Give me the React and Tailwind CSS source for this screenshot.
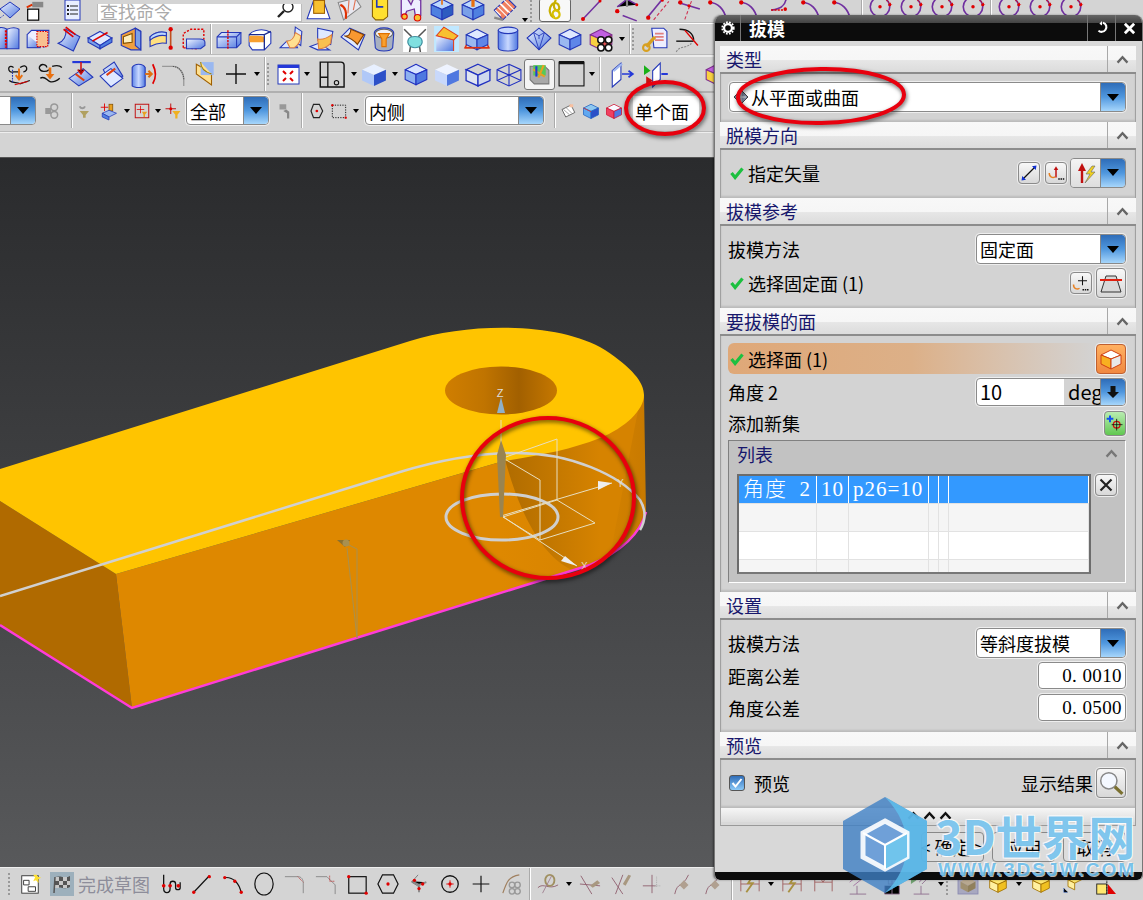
import React from "react";

const Svg = ({ children, s = 26 }) => (
  <svg viewBox="0 0 24 24" width={s} height={s} className="block shrink-0 overflow-visible">{children}</svg>
);
const cube = (t, l, r, st = "#2438b8") => (
  <g stroke={st} strokeWidth="1" strokeLinejoin="round">
    <polygon points="12,3 22,8 12,12.5 2,8" fill={t} />
    <polygon points="2,8 12,12.5 12,22 2,17" fill={l} />
    <polygon points="22,8 12,12.5 12,22 22,17" fill={r} />
  </g>
);
const dot = (x, y, r = 1.4, c = "#e00000") => <circle cx={x} cy={y} r={r} fill={c} />;

const I = {
  diamond: <g><polygon points="12,4 22,11 12,20 2,11" fill="url(#gb)" stroke="#2438b8" /><path d="M2 20l4-3" stroke="#2438b8" strokeDasharray="1 1" /></g>,
  newdoc: <g><rect x="4" y="10" width="12" height="12" fill="#fff" stroke="#111" strokeWidth="1.4" /><rect x="9" y="2" width="12" height="6" fill="#888" /><path d="M3 8l6-3" stroke="#e03000" strokeWidth="2" /></g>,
  list: <g><rect x="6" y="2" width="15" height="20" fill="#e8eeff" stroke="#2438b8" /><path d="M11 8h8M11 12h8M11 16h8" stroke="#222" /><rect x="8" y="7" width="2" height="2" fill="#222" /><rect x="8" y="11" width="2" height="2" fill="#222" /><rect x="8" y="15" width="2" height="2" fill="#222" /></g>,
  pyr: <g><polygon points="2,21 8,4 17,4 23,21" fill="#fff" stroke="#2438b8" /><rect x="8" y="4" width="10" height="12" fill="#f8c030" stroke="#a06000" /></g>,
  mesh: <g><path d="M2 6L18 2l5 8-16 12z" fill="#e8e8f0" stroke="#888" /><path d="M4 8c5 2 6 8 5 13" stroke="#e03000" strokeWidth="2" fill="none" /><path d="M18 3l-2 10M12 4l-1 12" stroke="#e07050" /></g>,
  yel: <g><path d="M5 1h14v18l-4 3H8l-3-3z" fill="#ffe030" stroke="#886000" /><path d="M9 1v9h6" stroke="#2438b8" strokeWidth="1.5" fill="none" /></g>,
  purp: <g><path d="M3 3h6l3 5 3-7 6 3v14h-5l-1-6-7 2-2 5H3z" fill="#eef" stroke="#7030a0" strokeWidth="1.2" /><circle cx="18" cy="20" r="3" fill="#f8c030" stroke="#d00" /><circle cx="6" cy="19" r="2.5" fill="#f8c030" stroke="#d00" /></g>,
  slab1: <g>{cube("#bcd8ff", "#4f80e0", "#2d5cc0")}<path d="M12 8V1M9 2l3-2 3 2" stroke="#e87010" strokeWidth="1.5" fill="none" /></g>,
  slab2: <g>{cube("#bcd8ff", "#7aa0e8", "#4f80e0")}<path d="M12 10V2" stroke="#e87010" strokeWidth="3" /><path d="M9 4l3-4 3 4z" fill="#e87010" /></g>,
  grid: <g><polygon points="3,13 15,2 23,10 11,22" fill="#f08060" stroke="#2438b8" /><path d="M6 10l9 9M9 7l9 9M12 4l9 9M9 18l-5-5M8 7l8 8" stroke="#fff" /><path d="M3 20l8 2" stroke="#888" strokeWidth="2" /></g>,
  knot: <g><path d="M10 20c-4-3-5-9-2-13 2-4 7-3 8 0 2 5-2 7-4 4-3-4 0-8 1-10" fill="none" stroke="#c8b000" strokeWidth="2.4" /><path d="M10 20c3 2 7 1 7-3s-5-6-7-3 1 6 2 6" fill="none" stroke="#d8c000" strokeWidth="2.4" /></g>,
  l1: <g><path d="M4 21L21 3" stroke="#7030a0" strokeWidth="1.5" />{dot(4, 21, 2)}{dot(21, 3, 1.5)}</g>,
  l2: <g><path d="M3 10l9-7 9 5M8 18l13 5" stroke="#7030a0" strokeWidth="1.4" /><path d="M12 3v7" stroke="#888" strokeWidth="2" />{dot(3, 14, 2)}{dot(21, 8)}</g>,
  l3: <g><path d="M2 20L16 3" stroke="#7030a0" strokeWidth="1.5" /><path d="M8 22L22 5" stroke="#d03050" strokeDasharray="3 2" />{dot(3, 20, 2)}{dot(16, 4)}</g>,
  l4: <g><path d="M2 6l20 6" stroke="#7030a0" strokeWidth="1.5" /><path d="M16 0L8 22" stroke="#d03050" strokeDasharray="3 2" />{dot(4, 6, 2)}{dot(12, 9, 1.5)}</g>,
  arc: <g><path d="M2 6c8 0 14 6 16 16" stroke="#7030a0" strokeWidth="1.6" fill="none" />{dot(3, 6, 2)}{dot(17, 20, 2)}</g>,
  arc2: <g><path d="M16 0c0 8-4 12-14 13" stroke="#7030a0" strokeWidth="1.6" fill="none" /><path d="M2 13h14" stroke="#e00000" strokeDasharray="2 1" strokeWidth="1.4" />{dot(15, 12, 1.6)}</g>,
  circ: <g><circle cx="12" cy="10" r="9" fill="none" stroke="#7030a0" strokeWidth="1.5" />{dot(12, 10, 1.6)}{dot(21, 8, 1.4)}<path d="M18 4l5 4" stroke="#e00000" strokeDasharray="1 1" /></g>,

  ribs: <g><path d="M1 3c4-2 8-2 11 0v18H1z" fill="url(#gb)" stroke="#2438b8" /><path d="M12 3c5-2 8-2 11 0v18H12z" fill="url(#gb)" stroke="#2438b8" /><path d="M11 4v16" stroke="#e00000" strokeDasharray="2 1" strokeWidth="2" /></g>,
  extr: <g><rect x="2" y="8" width="12" height="12" fill="url(#gb)" stroke="#2438b8" /><path d="M2 8l4-4h16v12l-5 4" fill="#eef" stroke="#2438b8" /><rect x="11" y="5" width="10" height="14" fill="#f8c090" stroke="#e00000" strokeDasharray="1.5 1" /></g>,
  sheet: <g><path d="M9 3l13 7-6 13-14-7c5-2 8-7 7-13z" fill="url(#gb)" stroke="#2438b8" /><path d="M9 1l9 7M7 3l9 7" stroke="#e00000" strokeWidth="1.5" /></g>,
  flat: <g><polygon points="12,5 23,11 12,18 1,11" fill="#dfe9ff" stroke="#2438b8" /><polygon points="1,11 12,18 12,21 1,15" fill="#7aa0e8" stroke="#2438b8" /><polygon points="23,11 12,18 12,21 23,15" fill="#4f80e0" stroke="#2438b8" /><path d="M5 14L19 6" stroke="#e00000" strokeWidth="1.5" /></g>,
  ushape: <g><polygon points="3,8 16,2 21,5 21,22 12,22 3,18" fill="#f0a040" stroke="#2438b8" /><polygon points="16,2 21,5 21,22 16,18" fill="#7aa0e8" stroke="#2438b8" /><path d="M5 10l8-3v8l-8 1z" fill="#fff0c0" stroke="#805000" /></g>,
  wave: <g><path d="M1 10c4-4 10-5 15-4v10c-5-1-10 0-15 3z" fill="#ffe080" stroke="#2438b8" /><path d="M1 10c4-4 10-5 15-4v3C11 8 6 9 1 13z" fill="#bcd8ff" stroke="#2438b8" /><path d="M20 3v17" stroke="#c05020" strokeWidth="1.5" />{dot(20, 3, 2, "#e00000")}{dot(20, 20, 2, "#e00000")}</g>,
  redbox: <g><path d="M3 20V7l7-4h12v13l-6 5z" fill="none" stroke="#e00000" strokeDasharray="2 1.4" strokeWidth="1.3" /><path d="M6 12h12c3 0 5 1 5 3v3l-4 3H6z" fill="url(#gb)" stroke="#2438b8" /></g>,
  bx1: <g><path d="M1 10l4-4h18v10l-4 4H1z" fill="url(#gb)" stroke="#2438b8" /><path d="M1 10h18v10M19 10l4-4" stroke="#2438b8" fill="none" /><path d="M11 4v18" stroke="#e00000" strokeDasharray="2 1" strokeWidth="1.3" /></g>,
  bx2: <g><path d="M2 8c4-5 14-6 20-2v10l-6 6H5l-3-4z" fill="#fff" stroke="#2438b8" /><path d="M2 9c6 0 11 0 14 1v5H2z" fill="#f8a030" /><path d="M2 8h14l6-3M16 8v14" stroke="#1a2a90" strokeWidth="1.2" fill="none" /></g>,
  lsh: <g><path d="M16 1l6 4-1 13-6-4z" fill="#dfe9ff" stroke="#2438b8" /><path d="M2 20l6-6 7 0 3 6z" fill="#dfe9ff" stroke="#2438b8" /><path d="M8 14c4 0 7-3 8-8l5 3c0 5-3 9-6 11l-4 0z" fill="#ffe090" stroke="#e08040" /></g>,
  lsh2: <g><path d="M8 2l14 3-2 12-12-4z" fill="#dfe9ff" stroke="#2438b8" /><path d="M1 19l8-3 10 6H8z" fill="#dfe9ff" stroke="#2438b8" /><path d="M8 12c4 1 9-1 13-4l-1 8c-3 3-7 5-11 5z" fill="#f8c050" stroke="#e08040" /></g>,
  orange: <g><path d="M1 10l8-8 14 6-6 14z" fill="#dfe9ff" stroke="#2438b8" /><path d="M4 9c4 1 6-2 6-6l12 5-6 9c-2-3-7-6-12-8z" fill="#f89830" stroke="#804000" /></g>,
  cup: <g><path d="M3 7c0-7 18-7 18 0l-1 13c-2 4-14 4-16 0z" fill="#a8b0c0" stroke="#2438b8" /><ellipse cx="12" cy="7" rx="8" ry="4" fill="#f0f0f8" stroke="#666" /><path d="M7 7h10l-3 5v7h-4v-7z" fill="#f8a030" stroke="#e07000" /></g>,
  teal: <g><rect x="1" y="0" width="22" height="24" fill="#fff" /><path d="M2 3l7 7M22 3l-7 7M8 18l-1 6M16 18l1 6" stroke="#555" strokeWidth="1.4" /><path d="M6 12c2-3 10-3 12 0 2 4-1 8-6 8s-8-4-6-8z" fill="#80e0e0" stroke="#4090a0" /></g>,
  otop: <g><rect x="1" y="0" width="23" height="24" fill="#c0e8ff" /><path d="M3 9l7-8 13 8-4 4z" fill="#f8c030" stroke="#e04020" /><path d="M3 9l16 4v10H3z" fill="url(#gb)" /><path d="M3 9l16 4v10" stroke="#e04020" fill="none" /></g>,
  rpyr: <g><path d="M1 20L8 7h8l7 13z" fill="none" stroke="#e03010" strokeWidth="1.4" />{cube("#dfe9ff", "#9ab8f0", "#5f86e8")}<path d="M1 20h22" stroke="#e03010" strokeWidth="1.4" /></g>,
  cyl: <g><path d="M3 4v16c0 4 18 4 18 0V4z" fill="url(#gh)" stroke="#2438b8" /><ellipse cx="12" cy="4" rx="9" ry="3" fill="#c8d8ff" stroke="#2438b8" /></g>,
  dia: <g><polygon points="12,2 23,11 12,22 1,11" fill="url(#gb)" stroke="#2438b8" /><path d="M1 11l6-5 5 3 5-3 6 5M7 6l5 16 5-16M12 9v3" stroke="#2438b8" fill="none" strokeWidth=".8" /></g>,
  blu: cube("#dfe9ff", "#9ab8f0", "#5f86e8"),
  cubes: <g>{cube("#c060e0", "#f8d040", "#e05050", "#803090")}{[[12, 13], [19, 13], [12, 20], [19, 20]].map(([x, y]) => <circle key={x + "" + y} cx={x} cy={y} r="3" fill="#fff" stroke="#111" strokeWidth="1.4" />)}</g>,
  key: <g><path d="M9 2h11l3 3v15H11z" fill="#eef" stroke="#2438b8" /><path d="M12 7h8M12 10h8M12 13h8" stroke="#e08080" strokeWidth="1.6" /><path d="M12 10l-8 9" stroke="#d8a020" strokeWidth="3" /><circle cx="4" cy="20" r="3" fill="none" stroke="#d8a020" strokeWidth="2" /></g>,
  trim: <g><path d="M3 14h16" stroke="#111" strokeWidth="1.3" /><path d="M6 3c8 0 13 4 13 10" stroke="#111" fill="none" strokeWidth="1.3" /><path d="M11 4l12 14" stroke="#e00000" strokeWidth="1.3" /><path d="M3 24c3-6 9-3 14-8" stroke="#888" strokeDasharray="2 1" fill="none" /></g>,

  c1: <g><path d="M7 6c-6-4-6 6 0 4h6" stroke="#111" fill="none" strokeWidth="1.2" /><path d="M13 6c7-5 8 4 3 4M3 18c3 3 7 1 10 3l9-3" stroke="#111" fill="none" strokeWidth="1.2" /><path d="M12 7v9M9 13l3 4 3-4" stroke="#e87010" strokeWidth="1.8" fill="none" /><path d="M6 8v12" stroke="#2438b8" strokeDasharray="1.5 1" /><path d="M8 22l12-3" stroke="#e00000" /></g>,
  c2: <g><path d="M2 6c2-5 7-2 7 0M2 6c1 5 7 4 9 2M14 5c3-1 7-1 9 1M3 16c4-3 6 2 9 3 3 1 7-1 9-3" stroke="#111" fill="none" strokeWidth="1.2" /><path d="M12 6v8" stroke="#e87010" strokeWidth="2.4" /><path d="M8 12l4 5 4-5z" fill="#e87010" /></g>,
  c3: <g><polygon points="1,16 14,7 23,15 10,23" fill="url(#gb)" stroke="#2438b8" /><path d="M4 1h17" stroke="#2438d8" strokeWidth="2" /><path d="M12 1v9M9 8l3 4 3-4" stroke="#d01010" strokeWidth="1.4" /><path d="M7 12l8 6" stroke="#e04010" strokeWidth="2" /></g>,
  c4: <g><polygon points="4,8 14,1 22,14 11,22" fill="url(#gb)" stroke="#2438b8" /><polygon points="1,14 11,7 22,16 11,24" fill="#dfe9ff" stroke="#2438b8" /><path d="M7 13l8-6" stroke="#e04010" strokeWidth="2" /></g>,
  c5: <g><path d="M2 6c2-4 10-4 12 0v17c-2 2-10 2-12 0z" fill="url(#gh)" stroke="#2438b8" /><path d="M14 12h5M17 9l3 3-3 3" stroke="#e07010" strokeWidth="2" fill="none" /><path d="M21 3c3 6 3 13 0 18" stroke="#e00000" fill="none" strokeWidth="1.6" /></g>,
  c6: <g><path d="M1 5h10c6 0 10 6 10 12v6" fill="none" stroke="#999" strokeWidth="1.2" /><path d="M11 5c6 0 10 6 10 12" stroke="#555" strokeDasharray="1 1" fill="none" /></g>,
  c7: <g><path d="M4 3l14 8v11L4 12z" fill="#ffe090" stroke="#a06000" /><path d="M8 1h12v12H8z" fill="#9ab8f0" /><path d="M8 1c0 5 3 9 10 11" fill="#ffe090" stroke="#a08000" /></g>,
  plus: <path d="M12 2v20M2 12h20" stroke="#111" strokeWidth="1.4" />,
  screen: <g><rect x="2" y="3" width="21" height="19" fill="#fff" stroke="#2438b8" /><rect x="2" y="3" width="21" height="3" fill="#2438d8" /><path d="M7 9l3 3M17 9l-3 3M7 19l3-3M17 19l-3-3" stroke="#e00000" strokeWidth="2" /></g>,
  page: <g><path d="M3 1h19c2 0 3 1 3 3v20H3z" fill="#d2d2d2" stroke="#111" strokeWidth="1.3" /><path d="M3 15h7M10 1v23" stroke="#111" strokeWidth="1.2" /><circle cx="18" cy="20" r="2" fill="none" stroke="#111" /></g>,
  soft: <g><polygon points="12,3 23,8 12,13 1,8" fill="#e8f0ff" /><polygon points="1,8 12,13 12,23 1,18" fill="#b0c8f8" /><polygon points="23,8 12,13 12,23 23,18" fill="#2c50c8" /></g>,
  edge: cube("#d8e4ff", "#8eb0f0", "#4f78e0", "#2030c0"),
  soft2: <g><polygon points="12,3 23,8 12,13 1,8" fill="#eef3ff" /><polygon points="1,8 12,13 12,23 1,18" fill="#c8d8fb" /><polygon points="23,8 12,13 12,23 23,18" fill="#5078e0" /></g>,
  wire1: <g stroke="#2030c0" strokeWidth="1.2" fill="none"><polygon points="12,3 23,8 12,13 1,8" /><polygon points="1,8 12,13 12,23 1,18" fill="#dfe4f0" /><polygon points="23,8 12,13 12,23 23,18" fill="#cfd8ee" /></g>,
  wire2: <g stroke="#2030c0" strokeWidth="1" fill="none"><polygon points="12,3 23,8 23,18 12,23 1,18 1,8" /><path d="M1 8l11 5 11-5M12 13v10M12 3v10M1 18l11-5 11 5" /></g>,
  render: <g><path d="M3 4h14l4 4v13H7l-4-4z" fill="#a8a8a8" stroke="#777" /><path d="M6 3h12v10H6z" fill="#58c858" /><path d="M6 7l11 7M16 3l-5 12" stroke="#e8a020" strokeWidth="2" /><path d="M9 4v10" stroke="#2438d8" strokeWidth="2" /></g>,
  black: <g><rect x="1" y="1" width="23" height="22" fill="#d2d2d2" stroke="#111" /><rect x="1" y="0" width="23" height="3" fill="#111" /></g>,
  cut1: <g><polygon points="3,9 11,2 11,17 3,24" fill="#fff" stroke="#2438b8" /><polygon points="3,9 11,2 13,3 5,10" fill="#a0b8f0" /><path d="M12 12h9M18 9l4 3-4 3" stroke="#2438d8" strokeWidth="1.6" fill="none" /></g>,
  cut2: <g><polygon points="8,9 15,2 15,17 8,24" fill="#fff" stroke="#2438b8" /><path d="M0 4l6 5-6 4z" fill="#18b018" /><path d="M2 14l6 4-6 5z" fill="#d01010" /><path d="M16 12h6" stroke="#2438d8" strokeWidth="1.8" /></g>,
  bfc: <g>{cube("#c060e0", "#f8d040", "#e05050", "#803090")}</g>,

  gears: <g><rect x="3" y="8" width="8" height="8" fill="#999" /><circle cx="15" cy="7" r="4.5" fill="none" stroke="#999" strokeWidth="2" /><circle cx="15" cy="17" r="4.5" fill="none" stroke="#999" strokeWidth="2" /></g>,
  f1: <g><path d="M4 5c2 4 6 4 8 0" stroke="#999" strokeWidth="3" fill="none" /><path d="M4 12h14l-5 6v4h-4v-4z" fill="#b0a060" /></g>,
  f2: <g><path d="M6 2v10M1 7h10" stroke="#e00000" strokeWidth="1.2" /><rect x="12" y="3" width="5" height="9" fill="#e8a020" stroke="#805000" /><polygon points="3,15 12,11 22,15 12,20" fill="#9ab8f0" stroke="#2438b8" /><polygon points="3,15 12,20 12,24 3,20" fill="#4f80e0" stroke="#2438b8" /></g>,
  f3: <g><rect x="3" y="3" width="18" height="18" fill="none" stroke="#c01010" strokeWidth="1.3" /><path d="M10 5v10M5 10h10" stroke="#e00000" /><path d="M12 13h7l-3 4v3h-2v-3z" fill="#e8a020" /></g>,
  f4: <g><path d="M9 2v14M2 9h14" stroke="#c01010" strokeWidth="1.3" />{dot(9, 9, 2)}<path d="M11 12h11l-4 5v5h-3v-5z" fill="#f0b020" /></g>,
  f5: <g><rect x="6" y="3" width="9" height="7" fill="#999" /><path d="M15 10l4 3v9h-3v-7l-5-3z" fill="#888" /></g>,
  hex: <g><polygon points="6,12 9,4 16,4 20,12 16,20 9,20" fill="none" stroke="#222" strokeWidth="1.4" />{dot(13, 12, 1.6)}</g>,
  rect: <g><rect x="4" y="5" width="16" height="15" fill="none" stroke="#222" strokeDasharray="1.5 1.5" strokeWidth="1.2" />{dot(4, 5)}{dot(20, 20)}</g>,
  s1: <g><polygon points="4,10 16,4 21,14 9,20" fill="#fff" stroke="#444" /><path d="M6 10l8 7M10 8l7 7" stroke="#888" /><rect x="14" y="3" width="5" height="4" fill="#f8c0a0" /></g>,
  s2: <g>{cube("#8ec8f0", "#60a8f0", "#2c50c8", "#2060c0")}<path d="M2 8l10 5" stroke="#e03030" /></g>,
  s3: <g>{cube("#f8f8ff", "#f04060", "#5078e0", "#d01030")}</g>,

  sk: <g><rect x="3" y="3" width="18" height="19" fill="#fff" stroke="#333" /><path d="M5 8h6v5H5zM10 15h8v5h-8z" fill="none" stroke="#333" /><path d="M19 1l1.5 3 3.5 1-3 2 .5 4-3-3-3 1 2-4-2-3h4z" fill="#ffe030" /></g>,
  flag: <g><rect x="0" y="0" width="24" height="24" fill="#9db0bc" /><path d="M5 5c6-2 10 2 15-1v11c-5 3-9-1-15 1z" fill="#555" /><path d="M5 5h4v4H5zM13 5h4v4h-4zM9 9h4v4H9zM17 9h3v4h-3zM5 13h4v3H5zM13 13h4v3h-4z" fill="#c8c8c8" /><path d="M5 5l-1 16" stroke="#555" strokeWidth="1.5" /></g>,
  prof: <g><path d="M4 2v15c0 6 7 6 7 0v-5c0-4 6-4 6 0v4c0 3 5 3 5 0V10" fill="none" stroke="#111" strokeWidth="1.4" />{dot(4, 14, 2)}{dot(11, 14, 2)}{dot(20, 14, 2)}</g>,
  line: <g><path d="M3 21L20 3" stroke="#111" strokeWidth="1.3" />{dot(3, 21, 1.8)}{dot(20, 4, 1.8)}</g>,
  arcs: <g><path d="M3 5c9-1 16 6 18 17" stroke="#111" fill="none" strokeWidth="1.3" />{dot(3, 5, 1.8)}{dot(14, 9, 1.8)}{dot(21, 21, 1.8)}</g>,
  cc: <ellipse cx="12" cy="12" rx="10" ry="12" fill="none" stroke="#111" strokeWidth="1.3" />,
  fil: <g><path d="M1 4h14c4 0 6 3 6 7v11" stroke="#888" fill="none" /><path d="M15 4l6 6" stroke="#c02020" strokeDasharray="1 1" /></g>,
  cha: <g><path d="M1 4h12l9 9v10" stroke="#888" fill="none" /><path d="M16 3v6h6" stroke="#c02020" strokeDasharray="1 1" fill="none" /></g>,
  rc: <g><rect x="3" y="4" width="19" height="18" fill="none" stroke="#111" strokeWidth="1.3" />{dot(3, 4, 1.8)}{dot(22, 22, 1.8)}</g>,
  hx: <g><polygon points="1,12 6,2 18,2 23,12 18,22 6,22" fill="none" stroke="#111" strokeWidth="1.3" />{dot(12, 12, 1.8)}</g>,
  spl: <g><path d="M4 9l8 4 8-3M12 13v8" stroke="#888" strokeWidth="2" /><path d="M11 2l-7 8 8 5" stroke="#777" fill="none" />{dot(7, 8, 1.8)}{dot(16, 12, 1.8)}{dot(12, 17, 1.8)}</g>,
  pt: <g><circle cx="12" cy="12" r="9" fill="none" stroke="#111" strokeWidth="1.4" /><path d="M8 12h8M12 8v8" stroke="#e00000" />{dot(12, 12, 1.8)}</g>,
  con: <g><path d="M2 22c4-12 6-18 18-20" stroke="#a08060" fill="none" strokeWidth="1.3" />{[[12, 13], [18, 13], [12, 20], [18, 20]].map(([x, y]) => <circle key={x + "-" + y} cx={x} cy={y} r="3" fill="none" stroke="#999" strokeWidth="1.5" />)}</g>,
  t1: <g><path d="M1 16c6-6 12 3 22-3" stroke="#906070" fill="none" /><ellipse cx="14" cy="8" rx="5" ry="6" fill="none" stroke="#a09060" strokeWidth="2" /><path d="M6 22L16 3" stroke="#a08090" /></g>,
  t2: <g><path d="M2 3l12 20M1 12l22 2" stroke="#906070" /><path d="M12 14l8-6 3 3-8 5z" fill="#a89880" /></g>,
  t3: <g><path d="M6 23L14 2M2 5l12 18" stroke="#906070" /><path d="M14 12l6-10 3 1-6 11z" fill="#a89880" /></g>,
  t4: <g><path d="M2 14h14M12 2v20" stroke="#906070" /><path d="M14 14h8M17 4v12" stroke="#aaa" strokeDasharray="1 1" /></g>,
  t5: <g><path d="M3 23c3-14 8-6 15-21" stroke="#906070" fill="none" /><path d="M13 8l5 5-5 5-5-5z" fill="#b0a090" /></g>,
  d1: <g><path d="M2 4v16M22 4v16M2 12h20" stroke="#a06060" /><path d="M16 2l-6 9h5l-7 10" fill="none" stroke="#a89040" strokeWidth="2" /></g>,
  d2: <g><path d="M3 4v16M22 4v16M3 10h19" stroke="#a06060" /><path d="M12 10l-2-3M12 10l2-3" stroke="#a06060" /></g>,
  p1: <g><path d="M4 10L14 2M8 14L18 6" stroke="#a070a0" /><path d="M12 14v9M4 23h18" stroke="#907090" /></g>,
  p2: <g><rect x="8" y="2" width="10" height="10" fill="none" stroke="#a09090" /><path d="M4 14v9h16v-9M12 8v15" stroke="#907090" /></g>,
  p3: <g><path d="M1 4l6 4-6 4z" fill="#70a070" /><path d="M10 10L18 2M13 12l8-8M12 14v9M4 23h17" stroke="#907090" /></g>,
  hi: <g><rect x="0" y="0" width="24" height="24" fill="#a8a8c0" stroke="#8888b0" /><polygon points="12,4 21,9 12,14 3,9" fill="#b8a890" /><polygon points="3,9 12,14 12,22 3,17" fill="#a09070" /><polygon points="21,9 12,14 12,22 21,17" fill="#90805c" /></g>,
  y1: <g>{cube("#ffe870", "#fff0a0", "#f0c020", "#a07000")}<path d="M20 0v4" stroke="#2060e0" strokeWidth="2" /></g>,
  y2: <g><polygon points="14,3 22,7 14,11 6,7" fill="#ffe870" stroke="#a07000" /><polygon points="6,7 14,11 14,19 6,15" fill="#fff0a0" stroke="#a07000" /><path d="M1 17v5h5" stroke="#2060e0" strokeDasharray="1 1" /></g>,
  y3: <g><rect x="3" y="12" width="11" height="11" fill="#ffe870" stroke="#222" /><path d="M15 12l9 11h-9z" fill="#e00000" /><path d="M14 0v24" stroke="#111" strokeDasharray="2 1" /><path d="M6 0l8 6 8-6z" fill="#1030c0" /></g>,
};

const Dd = () => <div className="w-[11px] shrink-0 flex justify-center"><div className="w-0 h-0 border-x-[3px] border-x-transparent border-t-[4px] border-t-black" /></div>;
const Sep = ({ w = "w-[5px]" }) => <div className={`${w} shrink-0 self-stretch flex justify-center`}><div className="w-[2px] border-l border-l-[#aaa] border-r border-r-white" /></div>;
const Grip = () => <div className="w-[7px] shrink-0 h-[22px] border-l-2 border-dotted border-l-[#999]" />;
const Slot = ({ n, w = "w-[31px]", s = 26 }) => <div className={`${w} shrink-0 flex justify-center`}><Svg s={s}>{I[n]}</Svg></div>;

function Tokens({ items }) {
  return items.map((t, i) => {
    if (t === "dd") return <Dd key={i} />;
    if (t === "sep") return <Sep key={i} />;
    if (t === "grip") return <Grip key={i} />;
    if (Array.isArray(t)) return <Slot key={i} n={t[0]} w={t[1]} s={t[2] || 26} />;
    return <Slot key={i} n={t} />;
  });
}

const Arrow = () => <div className="w-0 h-0 border-x-[6px] border-x-transparent border-t-[7px] border-t-black" />;
const BlueBtn = ({ w = "w-[25px]", children }) => (
  <div className={`${w} h-full shrink-0 flex items-center justify-center rounded-r-[3px] border-l border-l-[#888] bg-linear-to-b from-[#2f6db8] via-[#4f97de] to-[#a6d6fb]`}>
    {children || <Arrow />}
  </div>
);
const Combo = ({ text, className = "", children }) => (
  <div className={`flex items-stretch bg-white border border-[#8a8a8a] rounded-[4px] overflow-hidden shadow-[0_0_0_1px_#eee] ${className}`}>
    <div className="flex-1 min-w-0 flex items-center pl-[3px] text-[18px] leading-none text-black whitespace-nowrap">{children}{text}</div>
    <BlueBtn />
  </div>
);
const Btn = ({ className = "", children }) => (
  <div className={`shrink-0 flex items-center justify-center border border-[#8a8a8a] rounded-[4px] bg-linear-to-b from-[#f8f8f8] to-[#d8d8d8] shadow-[0_0_0_1px_#eee] ${className}`}>{children}</div>
);
const Check = () => (
  <svg viewBox="0 0 14 14" width="14" height="14" className="shrink-0">
    <path d="M1.5 7l3.6 4.500L12.500 2.500" fill="none" stroke="#1cc040" strokeWidth="3.200" />
  </svg>
);
const Chevron = ({ c = "#666" }) => (
  <svg viewBox="0 0 14 10" width="13" height="9"><path d="M1.5 8.5L7 2.5l5.5 6" fill="none" stroke={c} strokeWidth="2.6" /></svg>
);
const Header = ({ title }) => (
  <div className="h-[28px] shrink-0 flex items-stretch border-b-2 border-b-[#8c8c8c] bg-[linear-gradient(#f8f8f8_0%,#f6f6f6_52%,#e6e6e6_56%,#dcdcdc_100%)]">
    <div className="flex-1 pl-[6px] flex items-center text-[18px] leading-none text-[#17176c]">{title}</div>
    <div className="w-[29px] flex items-center justify-center border-l border-l-[#a8a8a8]"><Chevron /></div>
  </div>
);
const Body = ({ h, children }) => (
  <div className={`${h} shrink-0 flex flex-col pl-[7px] pr-[9px] bg-[#d3d3d3] border-x border-x-[#a0a0a0] shadow-[inset_0_-2px_2px_#bbb]`}>{children}</div>
);
const Num = ({ v }) => (
  <div className="w-[88px] h-[27px] bg-white border border-[#8a8a8a] rounded-[4px] flex items-center justify-end pr-[3px] text-[19px] leading-none tracking-[0.4px] [font-family:'Liberation_Serif',serif] text-black shadow-[0_0_0_1px_#eee]">{v}</div>
);

const cols = "grid grid-cols-[78px_32px_80px_10px_10px_140px]";
const Row = ({ bg, h, line = "border-r-[#e2e2e2]", cells = ["", "", "", "", "", ""], t = "" }) => (
  <div className={`${cols} ${bg} ${h} shrink-0 border-b border-b-[#e2e2e2]`}>
    {cells.map((c, i) => (
      <div key={i} className={`border-r ${line} flex items-center ${t} whitespace-nowrap overflow-hidden`}>{c}</div>
    ))}
  </div>
);

function Dialog() {
  return (
    <div className="absolute left-[714px] top-[15px] w-[429px] h-[865px] flex flex-col bg-[#d8d8d8] rounded-t-[8px] rounded-b-[5px] overflow-hidden border-x border-x-[#777] shadow-[-1px_0_2px_#0006]">
      <div className="h-[26px] shrink-0 flex items-stretch text-white bg-[linear-gradient(#666_0%,#444_30%,#0c0c0c_32%,#0c0c0c_100%)]">
        <div className="w-[26px] flex items-center justify-center border-r border-r-[#777]">
          <svg viewBox="0 0 16 16" width="14" height="14"><circle cx="8" cy="8" r="4.5" fill="none" stroke="#fff" strokeWidth="2.6" /><circle cx="8" cy="8" r="6.6" fill="none" stroke="#fff" strokeWidth="2" strokeDasharray="2 1.5" /></svg>
        </div>
        <div className="flex-1 pl-[8px] flex items-center text-[18px] font-bold leading-none">拔模</div>
        <div className="w-[28px] flex items-center justify-center border-l border-l-[#777]">
          <svg viewBox="0 0 16 16" width="14" height="14"><path d="M9 2c4 1 5 5 3 8-2 3-6 3-8 1" fill="none" stroke="#fff" strokeWidth="2.4" /><path d="M8 0v5l-3-2z" fill="#fff" /></svg>
        </div>
        <div className="w-[27px] flex items-center justify-center border-l border-l-[#777]">
          <svg viewBox="0 0 14 14" width="13" height="13"><path d="M2 2l10 10M12 2L2 12" stroke="#fff" strokeWidth="3" /></svg>
        </div>
      </div>
      <div className="flex-1 min-h-0 flex flex-col pt-[5px] pl-[5px] pr-[6px]">
        <Header title="类型" />
        <Body h="h-[48px]">
          <Combo className="mt-[8px] h-[30px] ml-[1px]">
            <svg viewBox="0 0 16 16" width="16" height="16" className="mr-[2px] shrink-0"><polygon points="8,1 15,8 8,15 1,8" fill="#7a88a0" stroke="#444" /><path d="M3 8h10M8 3v10" stroke="#ddd" /></svg>
            从平面或曲面
          </Combo>
        </Body>
        <Header title="脱模方向" />
        <Body h="h-[48px]">
          <div className="mt-[7px] h-[31px] flex items-center">
            <div className="w-[20px] pl-[2px]"><Check /></div>
            <span className="text-[18px] leading-none text-black">指定矢量</span>
            <div className="flex-1" />
            <Btn className="w-[22px] h-[22px] mr-[5px]"><Svg s={18}><path d="M4 20L20 4" stroke="#111" strokeWidth="1.6" /><path d="M2 22l6-1-5-5zM22 2l-6 1 5 5z" fill="#1030d0" /></Svg></Btn>
            <Btn className="w-[22px] h-[22px] mr-[3px]"><Svg s={18}><path d="M12 18V6" stroke="#c01010" strokeWidth="2" /><path d="M9 8l3-5 3 5z" fill="#c01010" /><path d="M3 12c0 6 5 7 8 5" stroke="#e88020" strokeWidth="2" fill="none" /><path d="M15 20h2M18 20h2M21 20h2" stroke="#111" strokeWidth="2" /></Svg></Btn>
            <div className="w-[56px] h-[30px] flex items-stretch border border-[#8a8a8a] rounded-[4px] overflow-hidden">
              <div className="flex-1 flex items-center justify-center bg-linear-to-b from-[#f4f4f4] to-[#dedede]"><Svg s={24}><path d="M8 22V8" stroke="#c01010" strokeWidth="2.4" /><path d="M4 10l4-8 4 8z" fill="#c01010" /><path d="M18 5l-6 8h4l-5 9 10-11h-4l4-6z" fill="#f0d020" stroke="#666" strokeWidth=".6" /></Svg></div>
              <BlueBtn />
            </div>
          </div>
        </Body>
        <Header title="拔模参考" />
        <Body h="h-[82px]">
          <div className="mt-[8px] h-[30px] flex items-center">
            <span className="text-[18px] leading-none text-black">拔模方法</span>
            <div className="flex-1" />
            <Combo text="固定面" className="w-[150px] h-full" />
          </div>
          <div className="mt-[4px] h-[30px] flex items-center">
            <div className="w-[20px] pl-[2px]"><Check /></div>
            <span className="text-[18px] leading-none text-black">选择固定面 (1)</span>
            <div className="flex-1" />
            <Btn className="w-[22px] h-[22px] mr-[4px]"><Svg s={18}><path d="M14 3v12M8 9h12" stroke="#111" strokeWidth="1.4" /><path d="M2 14c0 6 5 7 8 5" stroke="#e88020" strokeWidth="2" fill="none" /><path d="M14 21h2M17 21h2M20 21h2" stroke="#111" strokeWidth="2" /></Svg></Btn>
            <Btn className="w-[30px] h-[30px]"><Svg s={24}><path d="M7 5h10l5 16H2z" fill="#d8d8d8" stroke="#333" /><path d="M1 9h22" stroke="#e02010" strokeWidth="2" /></Svg></Btn>
          </div>
        </Body>
        <Header title="要拔模的面" />
        <Body h="h-[256px]">
          <div className="mt-[7px] h-[31px] flex items-center">
            <div className="w-[368px] h-full flex items-center rounded-[6px] bg-linear-to-r from-[#dfa878] via-[#dcb088] to-[#d3d3d3]">
              <div className="w-[20px] pl-[2px]"><Check /></div>
              <span className="text-[18px] leading-none text-black">选择面 (1)</span>
            </div>
            <div className="flex-1" />
            <Btn className="w-[30px] h-[30px] border-[#c06030] from-[#ffb060]! to-[#f08840]!"><Svg s={24}><g stroke="#d04010" strokeWidth="1"><polygon points="12,3 22,8 12,12 2,8" fill="#fff" /><polygon points="2,8 12,12 12,22 2,17" fill="#f8b020" /><polygon points="22,8 12,12 12,22 22,17" fill="#e8e8e8" /></g></Svg></Btn>
          </div>
          <div className="mt-[4px] h-[28px] flex items-center">
            <span className="text-[18px] leading-none text-black">角度 2</span>
            <div className="flex-1" />
            <div className="w-[150px] h-full flex items-stretch border border-[#8a8a8a] rounded-[4px] overflow-hidden bg-white shadow-[0_0_0_1px_#eee]">
              <div className="w-[87px] flex items-center pl-[3px] text-[20px] leading-none text-black">10</div>
              <div className="flex-1 min-w-0 bg-[#d3d3d3] overflow-hidden flex items-center pl-[4px] text-[20px] leading-none text-black whitespace-nowrap">deg</div>
              <BlueBtn>
                <svg viewBox="0 0 14 14" width="14" height="14"><path d="M4.5 1h5v6h3.5L7 13 1 7h3.500z" fill="#111" /></svg>
              </BlueBtn>
            </div>
          </div>
          <div className="mt-[4px] h-[26px] flex items-center">
            <span className="text-[18px] leading-none text-black">添加新集</span>
            <div className="flex-1" />
            <Btn className="w-[22px] h-[25px] border-[#3c7a3c] from-[#b8ecb0]! to-[#60c850]!"><Svg s={20}><path d="M2 7h8M6 3v8" stroke="#1050f0" strokeWidth="2.4" /><circle cx="14" cy="14" r="4" fill="none" stroke="#d01010" strokeWidth="1.6" /><path d="M14 7v14M8 14h13" stroke="#111" /></Svg></Btn>
          </div>
          <div className="mt-[4px] h-[143px] shrink-0 flex flex-col bg-[#c2c2c2] border border-[#808080] border-b-white border-r-white">
            <div className="h-[33px] shrink-0 flex items-center justify-between pl-[8px] pr-[7px] pb-[8px] text-[18px] leading-none text-[#17176c]">
              列表
              <Chevron c="#777" />
            </div>
            <div className="flex items-start pl-[8px]">
              <div className="w-[354px] h-[100px] flex flex-col border-2 border-[#6c6c6c] border-b-[#777] bg-white overflow-hidden">
                <Row bg="bg-[#3399ff]" h="h-[28px]" line="border-r-white" t="text-white text-[21px] leading-none [font-family:'Liberation_Serif','Noto_Sans_CJK_SC',serif] font-light pl-[4px] tracking-[1px]" cells={["角度\u00a0\u00a02", "10", "p26=10", "", "", ""]} />
                <Row bg="bg-[#f5f5f5]" h="h-[28px]" />
                <Row bg="bg-white" h="h-[28px]" />
                <Row bg="bg-[#f5f5f5]" h="h-[14px]" />
              </div>
              <Btn className="w-[22px] h-[22px] ml-[4px]">
                <svg viewBox="0 0 14 14" width="14" height="14"><path d="M1.500 1.500l11 11M12.500 1.500l-11 11" stroke="#222" strokeWidth="2.200" /></svg>
              </Btn>
            </div>
          </div>
        </Body>
        <Header title="设置" />
        <Body h="h-[112px]">
          <div className="mt-[8px] h-[30px] flex items-center">
            <span className="text-[18px] leading-none text-black">拔模方法</span>
            <div className="flex-1" />
            <Combo text="等斜度拔模" className="w-[150px] h-full" />
          </div>
          <div className="mt-[4px] flex items-center justify-between">
            <span className="text-[18px] leading-none text-black">距离公差</span>
            <Num v="0. 0010" />
          </div>
          <div className="mt-[5px] flex items-center justify-between">
            <span className="text-[18px] leading-none text-black">角度公差</span>
            <Num v="0. 0500" />
          </div>
        </Body>
        <Header title="预览" />
        <Body h="h-[48px]">
          <div className="mt-[8px] h-[30px] flex items-center">
            <div className="w-[16px] h-[16px] ml-[1px] rounded-[3px] border border-[#555] flex items-center justify-center bg-linear-to-b from-[#2f6db8] to-[#8ccaf8]">
              <svg viewBox="0 0 12 12" width="12" height="12"><path d="M1.500 6l3 3.500L10.500 2" fill="none" stroke="#fff" strokeWidth="2" /></svg>
            </div>
            <span className="text-[18px] leading-none text-black ml-[9px]">预览</span>
            <div className="flex-1" />
            <span className="text-[18px] leading-none text-black mr-[3px]">显示结果</span>
            <Btn className="w-[30px] h-[30px]">
              <svg viewBox="0 0 24 24" width="26" height="26"><circle cx="10" cy="10" r="7.500" fill="#f4f8ff" stroke="#888" strokeWidth="1.400" /><path d="M15.500 15.500l7 6.500" stroke="#7a7030" strokeWidth="3" /></svg>
            </Btn>
          </div>
        </Body>
        <div className="h-[14px] shrink-0 flex items-center justify-center gap-[3px] pl-[3px] bg-linear-to-b from-[#f6f6f6] to-[#dddddd] border-x border-x-[#a0a0a0]">
          <Chevron c="#111" /><Chevron c="#111" /><Chevron c="#111" />
        </div>
        <div className="h-[4px] shrink-0 border-b border-b-[#999] border-x border-x-[#a0a0a0]" />
        <div className="flex-1 flex items-start justify-end gap-[8px] pt-[6px] pr-[10px]">
          {["< 确定 >", "应用", "取消"].map((t) => (
            <div key={t} className="w-[63px] h-[30px] flex items-center justify-center rounded-[4px] border border-[#888] bg-[#dcdcdc] text-[18px] leading-none text-black whitespace-nowrap">{t}</div>
          ))}
        </div>
      </div>
      <div className="h-[8px] shrink-0 bg-[#0c0c0c] rounded-b-[5px]" />
    </div>
  );
}

function Model() {
  return (
    <svg viewBox="0 158 1143 709" className="block w-full h-full">
      <defs>
        <linearGradient id="hole" x1="0" x2="1" y1="0" y2="0">
          <stop offset="0" stopColor="#d07e00" /><stop offset=".35" stopColor="#c07400" /><stop offset=".66" stopColor="#a26000" /><stop offset="1" stopColor="#c67800" />
        </linearGradient>
        <linearGradient id="side" gradientUnits="userSpaceOnUse" x1="500" x2="645" y1="0" y2="0">
          <stop offset="0" stopColor="#de8800" /><stop offset=".7" stopColor="#d68300" /><stop offset="1" stopColor="#c87a00" />
        </linearGradient>
        <linearGradient id="wedge" gradientUnits="userSpaceOnUse" x1="505" x2="600" y1="0" y2="0">
          <stop offset="0" stopColor="#b06c00" /><stop offset="1" stopColor="#d68300" />
        </linearGradient>
      </defs>
      <polygon points="0,501 116,574 132,708 0,625" fill="#b06a00" />
      <path d="M116 574L500 462C560 452 610 430 644 395L646 512C640 535 620 552 590 565L132 708z" fill="url(#side)" />
      <path d="M503 452C518 510 540 555 572 570L610 556L640 400L600 440z" fill="url(#wedge)" />
      <path d="M0 469L410 341C470 322 560 322 605 350C632 368 644 382 644 395C644 410 625 428 600 438C570 450 540 455 500 462L116 574L0 501z" fill="#ffc400" />
      <ellipse cx="501" cy="390.500" rx="56" ry="24" fill="url(#hole)" />
      <path d="M0 625L132 708L590 565C620 552 640 535 646 512" fill="none" stroke="#ff3cd8" strokeWidth="2.500" />
      <path d="M0 596L400 472C440 460 480 453 517 453C570 453 620 475 640 500C646 510 646 520 640 530" fill="none" stroke="#d0d0d0" strokeWidth="2.500" />
      <ellipse cx="502" cy="517" rx="56" ry="23" fill="none" stroke="#cfcfcf" strokeWidth="3" />
      <g stroke="#e8dfc0" strokeWidth="1" fill="none">
        <path d="M501 420V516L612 483M502 516L577 566" />
        <path d="M503 458L540 480V540M503 458L557 439V500L503 517M540 540L595 523L557 500M503 517L540 540" />
      </g>
      <path d="M501 440L506 455L503 517H500L497 455z" fill="#9a8450" />
      <path d="M501 397L505 413H497z" fill="#8fb0c8" />
      <path d="M612 483L598 481V490z" fill="#eee" />
      <path d="M577 566L565 556L561 561z" fill="#eee" />
      <text x="500" y="397" textAnchor="middle" fill="#ddd" fontSize="11" fontFamily="Liberation Sans">Z</text>
      <text x="617" y="487" fill="#e8dfc0" fontSize="10" fontFamily="Liberation Sans">Y</text>
      <text x="581" y="570" fill="#e8dfc0" fontSize="10" fontFamily="Liberation Sans">X</text>
      <path d="M337 540L345 547L350 540z" fill="#8a7030" />
      <circle cx="346" cy="543" r="3.500" fill="#a89050" />
      <path d="M347 548L357 638V549L349 545" fill="none" stroke="#a89050" strokeWidth="1" />
    </svg>
  );
}

const row1 = [["diamond", "w-[30px]", 24], ["newdoc", "w-[20px]", 22], ["list", "w-[52px]", 24], "SEARCH", "pyr", "mesh", "yel", "purp", "slab1", "slab2", "grid", "dd", "grip", "KNOT", ["l1", "w-[40px]", 24], "l2", "l3", "l4", "arc", "arc", "arc2", "arc", "arc", "sep", "circ", "circ", "circ", "circ", "sep", "circ", "circ", "circ", "dd"];
const row2 = ["ribs", "extr", "sheet", "flat", "ushape", "wave", "redbox", "sep", "bx1", "bx2", "lsh", "lsh2", "orange", "cup", "teal", "otop", "rpyr", "cyl", "dia", "blu", "cubes", "dd", "sep", "grip", "key", "trim"];

export default function App() {
  return (
    <div className="relative w-[1143px] h-[900px] overflow-hidden flex flex-col bg-[#d4d4d4] [font-family:'Noto_Sans_CJK_SC','Liberation_Sans',sans-serif]">
      <svg className="absolute w-0 h-0">
        <defs>
          <linearGradient id="gb" x1="0" y1="0" x2="1" y2="1"><stop offset="0" stopColor="#f0f5ff" /><stop offset="1" stopColor="#4f78e0" /></linearGradient>
          <linearGradient id="gh" x1="0" y1="0" x2="1" y2="0"><stop offset="0" stopColor="#5f86e8" /><stop offset=".5" stopColor="#c8d8ff" /><stop offset="1" stopColor="#4f78e0" /></linearGradient>
        </defs>
      </svg>

      <div className="h-[158px] shrink-0 flex flex-col overflow-hidden border-b border-b-[#555]">
        <div className="h-[22px] shrink-0 flex items-end overflow-hidden -ml-[5px]">
          {row1.map((t, i) => {
            if (t === "SEARCH") return (
              <div key={i} className="w-[205px] shrink-0 h-[22px] flex items-end">
                <div className="w-[205px] h-[18px] flex items-end justify-between bg-white border border-[#bbb] border-t-0 pl-[2px] pr-[5px] text-[18px] leading-[18px] text-[#aaa] overflow-hidden">
                  <span className="-translate-y-[1px]">查找命令</span>
                  <svg viewBox="0 0 20 20" width="20" height="20"><circle cx="12" cy="6" r="5" fill="#fff" stroke="#222" strokeWidth="1.400" /><path d="M8 10l-6 6" stroke="#222" strokeWidth="2.400" /></svg>
                </div>
              </div>
            );
            if (t === "KNOT") return <div key={i} className="w-[32px] h-[24px] shrink-0 ml-[2px] flex justify-center bg-[#f8f8f8] border border-[#666] rounded-[3px]"><Svg s={22}>{I.knot}</Svg></div>;
            return <Tokens key={i} items={[t]} />;
          })}
        </div>
        <div className="h-[2px] shrink-0 border-b border-b-white bg-[#bdbdbd]" />
        <div className="h-[31px] shrink-0 flex items-center -ml-[9px] overflow-hidden border-b border-b-[#bbb]"><Tokens items={row2} /></div>
        <div className="h-[2px] shrink-0 bg-[#ececec]" />
        <div className="h-[34px] shrink-0 flex items-center pl-[3px] overflow-hidden">
          <Tokens items={["c1", "c2", "c3", "c4", "c5", "c6", "c7", ["plus", "w-[31px]", 24], "dd", "sep", "grip", ["screen", "w-[27px]", 24], "dd", ["page", "w-[36px]", 26], "dd", ["soft", "w-[30px]"], "dd", "edge", "soft2", "wire1", "wire2"]} />
          <div className="w-[31px] h-[31px] shrink-0 flex items-center justify-center bg-[#f4f4f4] border border-[#777] rounded-[3px]"><Svg s={25}>{I.render}</Svg></div>
          <Tokens items={["black", "dd", "sep", ["cut1", "w-[39px]", 26], "cut2", ["bfc", "w-[90px]", 26]]} />
        </div>
        <div className="h-[2px] shrink-0 bg-[#b0b0b0]" />
        <div className="h-[39px] shrink-0 flex items-center pb-[3px] border-b border-b-[#bbb]">
          <div className="w-[37px] h-[29px] shrink-0 -ml-[1px] flex justify-end bg-white border border-[#8a8a8a] rounded-r-[4px] overflow-hidden"><BlueBtn /></div>
          <Slot n="gears" w="w-[31px]" s={18} />
          <div className="w-[3px] shrink-0" />
          <Sep w="w-[4px]" />
          <Slot n="f1" w="w-[22px]" s={16} />
          <Slot n="f2" w="w-[25px]" s={18} />
          <Dd />
          <Slot n="f3" w="w-[20px]" s={18} />
          <Dd />
          <Slot n="f4" w="w-[20px]" s={18} />
          <Combo text="全部" className="w-[83px] h-[29px] ml-[3px]" />
          <Slot n="f5" w="w-[30px]" s={18} />
          <Sep />
          <Slot n="hex" w="w-[24px]" s={20} />
          <Slot n="rect" w="w-[22px]" s={20} />
          <Dd />
          <Combo text="内侧" className="w-[179px] h-[29px] ml-[4px]" />
          <div className="w-[8px] shrink-0" />
          <Sep />
          <Slot n="s1" w="w-[22px]" s={18} />
          <Slot n="s2" w="w-[24px]" s={18} />
          <Slot n="s3" w="w-[22px]" s={18} />
          <div className="w-[8px] shrink-0" />
          <div className="w-[66px] h-[29px] shrink-0 flex items-center bg-white pl-[2px] text-[18px] leading-none text-black">单个面</div>
        </div>
        <div className="flex-1 border-t border-t-[#eee]" />
      </div>

      <div className="flex-1 min-h-0 bg-linear-to-b from-[#2a2b2d] to-[#58595b]"><Model /></div>

      <div className="h-[33px] shrink-0 flex items-center pl-[8px] bg-[#d4d4d4] border-t border-t-[#eee] overflow-hidden">
        <Grip />
        <Slot n="sk" w="w-[30px]" s={22} />
        <Slot n="flag" w="w-[33px]" s={24} />
        <span className="w-[77px] shrink-0 text-[18px] leading-none text-[#8d8d9a] whitespace-nowrap">完成草图</span>
        <Tokens items={[["prof", "w-[31px]", 22], ["line", "w-[31px]", 22], ["arcs", "w-[31px]", 22], ["cc", "w-[31px]", 22], ["fil", "w-[31px]", 22], ["cha", "w-[31px]", 22], ["rc", "w-[31px]", 22], ["hx", "w-[31px]", 22], ["spl", "w-[31px]", 22], ["pt", "w-[31px]", 22], ["plus", "w-[31px]", 20], ["con", "w-[31px]", 22], "sep", ["t1", "w-[31px]", 22], "dd", ["t2", "w-[31px]", 22], ["t3", "w-[31px]", 22], ["t4", "w-[31px]", 22], ["t5", "w-[31px]", 22], ["t5", "w-[31px]", 22], "sep", ["d1", "w-[31px]", 22], "dd", ["d1", "w-[31px]", 22], ["d2", "w-[31px]", 22], ["p1", "w-[38px]", 22], ["p2", "w-[31px]", 22], ["p3", "w-[28px]", 22], "dd", "grip", ["hi", "w-[30px]", 20], ["y1", "w-[30px]", 20], "dd", ["y1", "w-[33px]", 20], ["y2", "w-[31px]", 20], ["y3", "w-[33px]", 22]]} />
      </div>

      <Dialog />

      <svg className="absolute inset-0 w-[1143px] h-[900px] pointer-events-none [filter:drop-shadow(1px_2px_2px_rgba(0,0,0,0.6))]" viewBox="0 0 1143 900">
        <ellipse cx="665" cy="108" rx="39" ry="26" fill="none" stroke="#e8000e" strokeWidth="4" />
        <ellipse cx="821" cy="96" rx="83" ry="27" fill="none" stroke="#e8000e" strokeWidth="4" transform="rotate(-1 821 96)" />
        <ellipse cx="548" cy="498" rx="86" ry="80" fill="none" stroke="#e8000e" strokeWidth="4" />
      </svg>

      <div className="absolute left-[843px] top-[797px] w-[300px] h-[96px] pointer-events-none">
        <svg viewBox="0 0 84 96" width="84" height="96" className="absolute left-0 top-0">
          <polygon points="42,0 84,24 84,72 42,96 0,72 0,24" fill="#3f7fc4" fillOpacity=".8" />
          <path d="M42 0L84 24V72L42 96C70 70 72 30 42 0z" fill="#5fc0ee" fillOpacity=".8" />
          <polygon points="42,24 64,36 64,60 42,72 20,60 20,36" fill="#6fa0d8" stroke="#fff" strokeWidth="5" strokeOpacity=".9" />
          <polygon points="42,48 64,36 64,60 42,72" fill="#70c4ec" />
          <path d="M20 36L42 48L64 36M42 48V72" fill="none" stroke="#fff" strokeWidth="2" />
        </svg>
        <div className="absolute left-[92px] top-[11px] text-[47px] leading-[54px] font-bold tracking-[-0.5px] whitespace-nowrap text-[#56b4e8]/75 [text-shadow:1px_1px_0_#ffffffb0,-1px_-1px_0_#ffffffb0,1px_-1px_0_#ffffffb0,-1px_1px_0_#ffffffb0]">3D世界网</div>
        <div className="absolute left-[95px] top-[63px] text-[19px] leading-[20px] font-bold tracking-[2px] whitespace-nowrap text-[#56b4e8]/80 [font-family:'Liberation_Sans',sans-serif] [text-shadow:1px_1px_0_#ffffffb0,-1px_-1px_0_#ffffffb0]">WWW.3DSJW.COM</div>
      </div>
    </div>
  );
}
